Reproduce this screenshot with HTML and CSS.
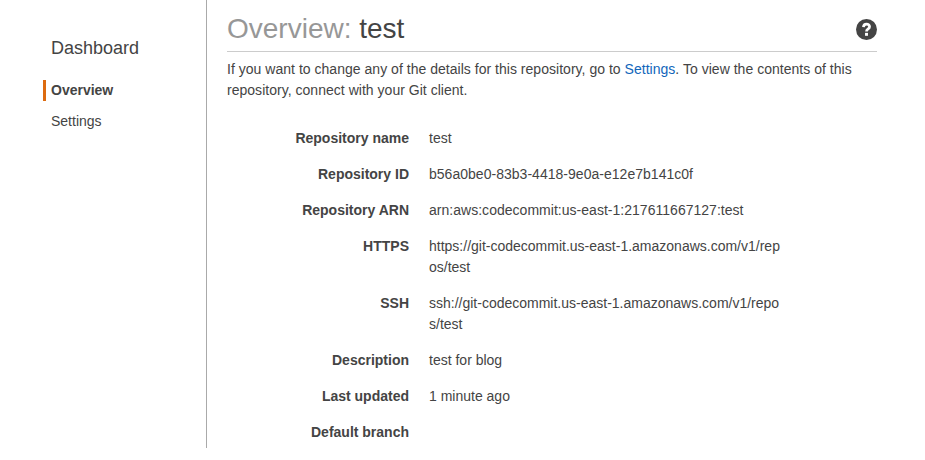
FILE: index.html

```html
<!DOCTYPE html>
<html lang="en">
<head>
    <meta charset="UTF-8">
    <title>Overview: test</title>
    <link rel="stylesheet" href="styles.css">
</head>
<body>
    <div class="layout">
        <aside class="sidebar">
            <h2>Dashboard</h2>
            <nav class="side-nav">
                <a href="#overview" class="active">Overview</a>
                <a href="#settings">Settings</a>
            </nav>
        </aside>

        <main class="content">
            <header class="page-header">
                <h1><span class="muted">Overview:</span> test</h1>
                <svg class="help" width="21" height="21" viewBox="0 0 20 20" aria-label="Help">
                    <circle cx="10" cy="10" r="10" fill="#444"/>
                    <path d="M7.1 7.7C7.2 5.9 8.4 4.9 10 4.9C11.7 4.9 12.9 5.9 12.9 7.3C12.9 8.4 12.2 9 11.3 9.6C10.4 10.2 10 10.7 10 11.9" fill="none" stroke="#fff" stroke-width="2.6"/>
                    <rect x="8.6" y="13.2" width="2.8" height="2.8" fill="#fff"/>
                </svg>
            </header>
            <p class="intro">If you want to change any of the details for this repository, go to <a href="#settings">Settings</a>. To view the contents of this repository, connect with your Git client.</p>

            <dl class="details">
                <dt>Repository name</dt>
                <dd>test</dd>
                <dt>Repository ID</dt>
                <dd class="wide">b56a0be0-83b3-4418-9e0a-e12e7b141c0f</dd>
                <dt>Repository ARN</dt>
                <dd class="wide">arn:aws:codecommit:us-east-1:217611667127:test</dd>
                <dt>HTTPS</dt>
                <dd>https://git-codecommit.us-east-1.amazonaws.com/v1/repos/test</dd>
                <dt>SSH</dt>
                <dd>ssh://git-codecommit.us-east-1.amazonaws.com/v1/repos/test</dd>
                <dt>Description</dt>
                <dd>test for blog</dd>
                <dt>Last updated</dt>
                <dd>1 minute ago</dd>
                <dt>Default branch</dt>
                <dd></dd>
            </dl>
        </main>
    </div>
</body>
</html>
```

FILE: styles.css

```css
* {
    margin: 0;
    padding: 0;
    box-sizing: border-box;
}

body {
    background: #fff;
    color: #444;
    font-family: "Liberation Sans", Arial, sans-serif;
    font-size: 14px;
    line-height: 21px;
}

.layout {
    display: flex;
    height: 448px;
    overflow: hidden;
}

.sidebar {
    flex: 0 0 207px;
    border-right: 1px solid #aaa;
    padding: 36px 0 0 43px;
}

.sidebar h2 {
    font-size: 18px;
    font-weight: normal;
    line-height: 24px;
    margin: 0 0 20px 8px;
}

.side-nav a {
    display: block;
    color: #444;
    text-decoration: none;
    height: 21px;
    margin-bottom: 10px;
    padding-left: 8px;
}

.side-nav a.active {
    font-weight: bold;
    border-left: 3px solid #dd6b10;
    padding-left: 5px;
}

.content {
    flex: 0 0 650px;
    margin-left: 20px;
}

.page-header {
    display: flex;
    justify-content: space-between;
    align-items: flex-start;
    height: 52px;
    border-bottom: 1px solid #ccc;
}

.page-header h1 {
    font-size: 28px;
    font-weight: normal;
    line-height: 58px;
}

.muted {
    color: #979797;
}

.help {
    margin: 19px 0 0 0;
}

.intro {
    margin-top: 7px;
    letter-spacing: 0.025px;
}

.intro a {
    color: #1166bb;
    text-decoration: none;
}

.details {
    display: grid;
    grid-template-columns: 182px 351px;
    column-gap: 20px;
    row-gap: 15px;
    margin-top: 27px;
}

.details dt {
    font-weight: bold;
    text-align: right;
}

.details dd {
    word-break: break-all;
}

.details dd.wide {
    letter-spacing: 0.025px;
}
```
